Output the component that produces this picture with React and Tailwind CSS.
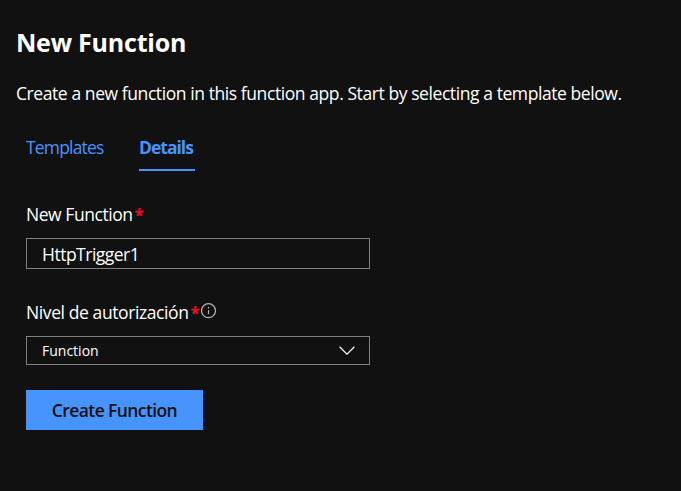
function Required() {
  return <span className="ml-[2px] w-[10px] pt-[2px] text-[17px] font-bold tracking-normal text-[#e81123]">*</span>;
}

function InfoIcon() {
  return (
    <svg className="mt-[2px] size-[16px] shrink-0" viewBox="0 0 16 16" fill="none" stroke="#b4b4b4">
      <circle cx="7.5" cy="7.7" r="7" strokeWidth="1.2" />
      <path d="M7.5 7V11M7.5 4V5.4" strokeWidth="1.1" />
    </svg>
  );
}

export default function App() {
  return (
    <main className="flex h-[491px] w-[681px] flex-col items-start overflow-hidden bg-[#111111] px-4 pt-[23px] font-['Open_Sans','Noto_Sans',sans-serif] text-[17.5px] text-white">
      <h1 className="h-[39px] text-[25px] leading-[38px] font-bold tracking-[-0.22px] whitespace-nowrap">New Function</h1>
      <p className="mt-[20px] h-6 leading-[22px] tracking-[-0.42px] whitespace-nowrap">
        Create a new function in this function app. Start by selecting a template below.
      </p>

      <div className="ml-[10px] flex flex-col items-start">
        <nav className="mt-[30px] flex h-[35px] gap-[35px] leading-[22px] text-[#4894fe]">
          <a className="w-[78px] tracking-[-0.82px] whitespace-nowrap">Templates</a>
          <a className="w-[56px] border-b-2 border-[#4894fe] font-bold tracking-[-1px] whitespace-nowrap">Details</a>
        </nav>

        <label className="mt-8 flex h-6 leading-[22px] tracking-[-0.45px] whitespace-nowrap">
          New Function
          <Required />
        </label>
        <input
          className="mt-[11px] h-[31px] w-[344px] border border-[#808080] bg-transparent px-[15px] tracking-[-0.5px] outline-none"
          defaultValue="HttpTrigger1"
        />

        <label className="mt-8 flex h-6 leading-[22px] tracking-[-0.4px] whitespace-nowrap">
          Nivel de autorización
          <Required />
          <InfoIcon />
        </label>
        <div className="mt-[11px] flex h-[29px] w-[344px] items-center justify-between border border-[#808080] pr-[14px] pl-[15px] text-[14px]">
          <span>Function</span>
          <svg className="h-[9px] w-[16px]" viewBox="0 0 16 9" fill="none" stroke="#ffffff" strokeWidth="1.2">
            <path d="M.6 .8 8 8.1 15.4 .8" />
          </svg>
        </div>

        <button className="mt-[25px] h-10 w-[177px] bg-[#4894fe] font-semibold tracking-[-0.6px] whitespace-nowrap text-[#111111]">
          Create Function
        </button>
      </div>
    </main>
  );
}
